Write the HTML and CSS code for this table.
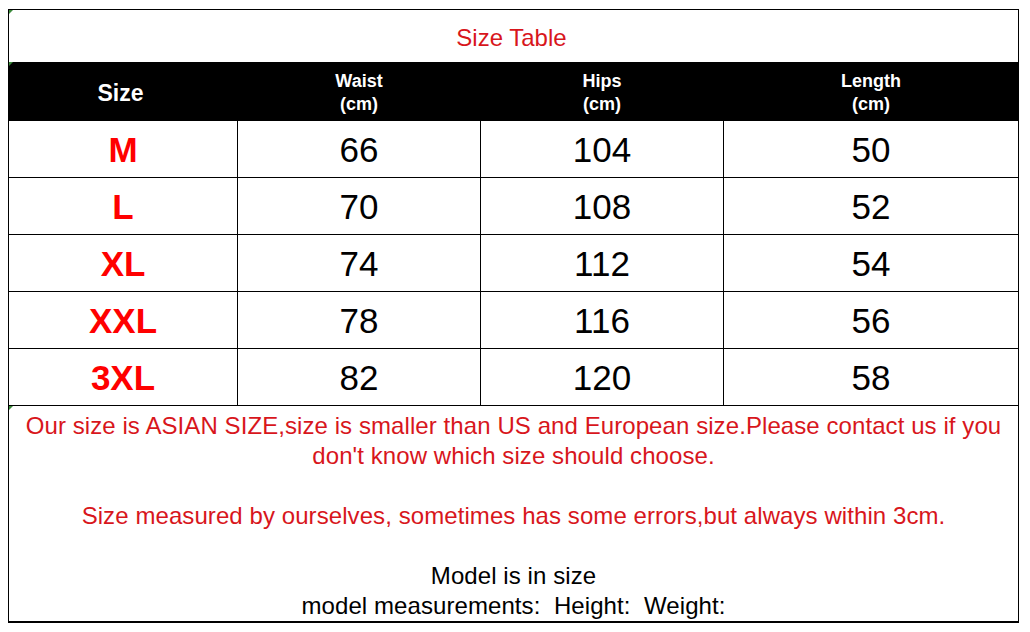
FILE: index.html
```html
<!DOCTYPE html>
<html>
<head>
<meta charset="utf-8">
<link rel="stylesheet" href="styles.css">
</head>
<body>
<div class="sheet">
  <div class="title"><span class="mark"></span>Size Table</div>
  <div class="grid">
    <div class="cell head head-size"><span class="mark"></span>Size</div>
    <div class="cell head small">Waist<br>(cm)</div>
    <div class="cell head small">Hips<br>(cm)</div>
    <div class="cell head small">Length<br>(cm)</div>

    <div class="cell size">M</div><div class="cell num">66</div><div class="cell num">104</div><div class="cell num">50</div>
    <div class="cell size">L</div><div class="cell num">70</div><div class="cell num">108</div><div class="cell num">52</div>
    <div class="cell size">XL</div><div class="cell num">74</div><div class="cell num">112</div><div class="cell num">54</div>
    <div class="cell size">XXL</div><div class="cell num">78</div><div class="cell num">116</div><div class="cell num">56</div>
    <div class="cell size">3XL</div><div class="cell num">82</div><div class="cell num">120</div><div class="cell num">58</div>
  </div>
  <div class="notes"><span class="mark"></span>
    <p class="red">Our size is ASIAN SIZE,size is smaller than US and European size.Please contact us if you<br>don't know which size should choose.</p>
    <p class="red gap">Size measured by ourselves, sometimes has some errors,but always within 3cm.</p>
    <p class="black gap">Model is in size<br>model measurements:&nbsp; Height:&nbsp; Weight:</p>
  </div>
</div>
</body>
</html>
```
FILE: styles.css
```css
* { box-sizing: border-box; }
html, body { margin: 0; padding: 0; background: #fff; }
body {
  font-family: "Liberation Sans", Arial, sans-serif;
  width: 1030px;
  height: 632px;
  overflow: hidden;
}
.sheet {
  margin: 9px 0 0 8px;
  width: 1011px;
  border: 1px solid #000;
  border-bottom-width: 2px;
}
.mark {
  position: absolute;
  left: 0;
  top: 0;
  width: 0;
  height: 0;
  border-top: 4px solid #3a8a3a;
  border-right: 4px solid transparent;
}
.title {
  position: relative;
  height: 52px;
  display: flex;
  align-items: center;
  justify-content: center;
  padding-top: 3px;
  padding-right: 4px;
  color: #d8161c;
  font-size: 24px;
}
.grid {
  display: grid;
  grid-template-columns: 228px 242px 242px 294px;
  grid-template-rows: 58px repeat(5, 56px);
  gap: 1px;
  background: #000;
}
.cell {
  background: #fff;
  display: flex;
  align-items: center;
  justify-content: center;
  text-align: center;
}
.head {
  position: relative;
  background: #000;
  color: #fff;
  font-weight: bold;
}
.head-size { font-size: 23px; padding-top: 4px; padding-right: 5px; }
.head.small { font-size: 18px; line-height: 23px; padding-top: 4px; }
.size {
  color: #f00;
  font-weight: bold;
  font-size: 35px;
  padding-top: 2px;
}
.num {
  color: #000;
  font-size: 35px;
  padding-top: 2px;
}
.notes {
  position: relative;
  border-top: 1px solid #000;
  height: 216px;
  padding-top: 5px;
  text-align: center;
  font-size: 24px;
  line-height: 30px;
  letter-spacing: 0.08px;
}
.notes p { margin: 0; }
.notes .gap { margin-top: 30px; }
.red { color: #d8161c; }
.black { color: #000; }
```
